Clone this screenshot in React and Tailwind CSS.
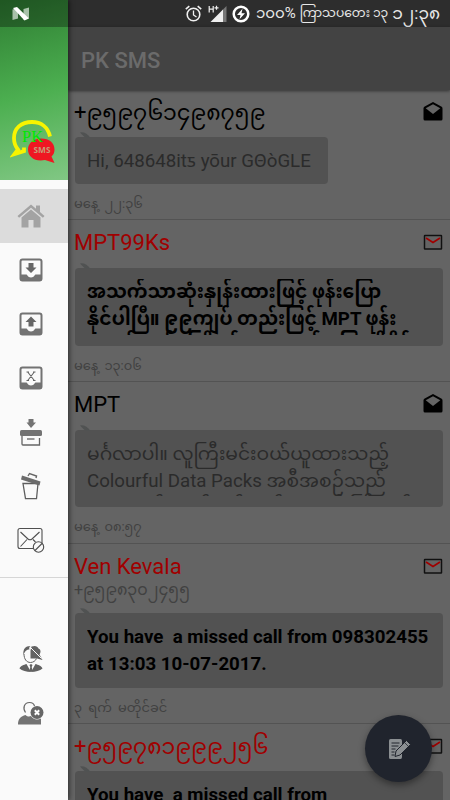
import React from 'react';
import clsx from 'clsx';

const FONT = "font-[Roboto,'Noto_Sans_Myanmar',Padauk,'Noto_Sans','DejaVu_Sans',sans-serif]";

const messages = [
  {
    name: '+၉၅၉၇၆၁၄၉၈၇၅၉',
    read: true,
    height: 'h-[130px]',
    headHeight: 'h-[47px]',
    bubble: 'h-[47px] w-[253px]',
    lines: ['Hi, 648648itƽ yōur GΘòGLE'],
    time: 'မနေ့ ၂၂:၃၆',
  },
  {
    name: 'MPT99Ks',
    read: false,
    height: 'h-[162px]',
    headHeight: 'h-[48px]',
    bubble: 'h-[78px] w-[368px]',
    lines: [
      'အသက်သာဆုံးနှုန်းထားဖြင့် ဖုန်းပြော',
      'နိုင်ပါပြီ။ ၉၉ကျပ် တည်းဖြင့် MPT ဖုန်း',
      'အချင်းချင်း ကြိုက်သလောက် ပြောဆိုနိုင်',
    ],
    time: 'မနေ့ ၁၃:၀၆',
  },
  {
    name: 'MPT',
    read: true,
    height: 'h-[162px]',
    headHeight: 'h-[48px]',
    bubble: 'h-[77px] w-[368px]',
    lines: ['မင်္ဂလာပါ။ လူကြီးမင်းဝယ်ယူထားသည့်', 'Colourful Data Packs အစီအစဉ်သည်', 'ယနေ့တွင် သက်တမ်းကုန်ဆုံးမည် ကြိုတင်'],
    time: 'မနေ့ ၀၈:၅၇',
  },
  {
    name: 'Ven Kevala',
    number: '+၉၅၉၈၃၀၂၄၅၅',
    read: false,
    height: 'h-[180px]',
    headHeight: 'h-[69px]',
    bubble: 'h-[75px] w-[368px]',
    lines: ['You have  a missed call from 098302455', 'at 13:03 10-07-2017.'],
    time: '၃ ရက် မတိုင်ခင်',
  },
  {
    name: '+၉၅၉၇၈၁၉၉၉၂၅၆',
    read: false,
    height: 'h-[162px]',
    headHeight: 'h-[47px]',
    bubble: 'h-[77px] w-[368px]',
    lines: ['You have  a missed call from'],
    time: '',
  },
];

function NougatIcon() {
  return (
    <svg width="18" height="14" viewBox="0 0 18 14">
      <path d="M0.5 2.5 6 1v10.500L0.500 13z" fill="#a9c2aa" />
      <path d="M11.500 2 17 0.500v10.500l-5.500 2z" fill="#a9c2aa" />
      <path d="M1 1 5 0 17 11.500 12.500 13.500z" fill="#fff" />
    </svg>
  );
}

function LogoIcon() {
  return (
    <svg width="48" height="46" viewBox="0 0 48 46">
      <path d="M40 17.500C38 8 31 3 22 3 11 3 4 9.500 4 19c0 5 1.500 8.500 4 11.500L4.500 35l9.500-3v-3.500" fill="none" stroke="#f8f400" strokeWidth="3.800" />
      <path d="M31 19.500c8.500 0 13.500 4.500 13.500 11 0 3-1 5-3 7l3 6.500-9.500-3c-10 2-17-3-17-10.500 0-6 5-11 13-11z" fill="#ef1722" />
      <text x="12" y="22.500" fontSize="17" textLength="21" lengthAdjust="spacingAndGlyphs" fill="#00e800" fontFamily="Liberation Serif, serif">PK</text>
      <text x="23.500" y="33.500" fontSize="8.500" fontWeight="700" textLength="17" lengthAdjust="spacingAndGlyphs" fill="#c99a75" fontFamily="Open Sans, sans-serif">SMS</text>
    </svg>
  );
}

function HomeIcon() {
  return (
    <svg width="28" height="24" viewBox="0 0 28 24" fill="#a3a3a3">
      <path d="M14 0.500 0.500 12l1.600 1.700L14 3.700l11.900 10 1.600-1.700-4.500-3.900V1.500h-4v3.200z" />
      <path d="M14 5.500 4.500 13.500V23.500h7v-7.500h5v7.500h7V13.500z" />
    </svg>
  );
}

function TrayIcon({ type }) {
  return (
    <svg width="24" height="24" viewBox="0 0 24 24">
      <rect x="1.500" y="1.500" width="21" height="21" rx="2" fill="#fafafa" stroke="#737373" strokeWidth="2" />
      <path d="M1.500 16.500h6c1 0 1 3 4.500 3s3.500-3 4.500-3h6v6h-21z" fill="#737373" />
      {type === 'in' && <path d="M9.500 5h5v4.500h3L12 15 6.500 9.500h3z" fill="#666" />}
      {type === 'out' && <path d="M9.500 14.500h5V10h3L12 4.500 6.500 10h3z" fill="#666" />}
      {type === 'draft' && <path d="m8.700 6 6.600 8.500M15.300 6l-6.600 8.500M7.500 6H10M14 6h2.500M7.500 14.500H10M14 14.500h2.500" stroke="#666" strokeWidth="1.100" />}
    </svg>
  );
}

function ArchiveIcon() {
  return (
    <svg width="24" height="28" viewBox="0 0 24 28">
      <path d="M9.500 1h5v3.500H17L12 10 7.500 4.500h2z" fill="#737373" />
      <rect x="1" y="12" width="22" height="6" rx="1.500" fill="#737373" />
      <path d="M3 18v8q0 1 1 1h16.500V20" fill="none" stroke="#666" strokeWidth="1.300" />
      <path d="M8 21h7.500" stroke="#777" strokeWidth="1.500" />
    </svg>
  );
}

function TrashIcon() {
  return (
    <svg width="24" height="28" viewBox="0 0 24 28">
      <path d="M4 11.500h15l-1.500 15.200h-11z" fill="none" stroke="#5e5e5e" strokeWidth="1.300" />
      <path d="m3 3.500 18.500 6-1 4L2 7.500z" fill="#6c6c6c" />
      <path d="m9 4 1.500-2.500 7 2.500-.5 2" fill="none" stroke="#666" strokeWidth="1.400" />
    </svg>
  );
}

function BlockedMailIcon() {
  return (
    <svg width="28" height="26" viewBox="0 0 28 26" fill="none" stroke="#4f4f4f" strokeWidth="1.100">
      <rect x="1" y="1.500" width="24" height="20" rx="2" />
      <path d="m3.500 5 7.500 7q2 1.500 4 0l7.500-7M3.500 19.500l6.500-7M16 12.500l2.500 2.500" />
      <circle cx="21.500" cy="20" r="5.200" fill="#fafafa" />
      <path d="m18 23.500 7-7" />
    </svg>
  );
}

function SpamContactIcon() {
  return (
    <svg width="24" height="28" viewBox="0 0 24 28">
      <path d="M4.500 10C3.500 4 7 .8 11.500 1c-1.500 1-1.500 2.500-1 3.500C7.500 4.500 6 6 4.500 10z" fill="#626262" />
      <path d="M12.500 1.500c4-1.500 6 0 7 2 2.500 1 2.500 4 1 6l3 5.500-5.500-1.500h-6.500V5.500z" fill="#626262" />
      <path d="M5 9c0 5 2.500 8.500 6.500 8.500 2.500 0 5-1.500 6-4" fill="none" stroke="#626262" strokeWidth="1" />
      <path d="M0.500 23.500c1-3 4.500-3.500 7-4.500l4.500 8 4.500-8c2.500 1 6 1.500 7 4.500-5 4.500-18 4.500-23 0z" fill="#626262" />
      <path d="m10.500 20 1.500-1 1.500 1-.8 2 .8 3.500-1.500 1.500-1.500-1.500.8-3.500z" fill="#626262" />
      <path d="m11.500 2.500 11 11" stroke="#fafafa" strokeWidth="1" />
    </svg>
  );
}

function BlockContactIcon() {
  return (
    <svg width="28" height="24" viewBox="0 0 28 24">
      <path d="M8.500 11.500C5.500 7.500 7 1.500 12.500 1.500c2.500 0 4.500 1.500 5 3.500" fill="none" stroke="#666" strokeWidth="1.200" />
      <path d="M1 23.500c0-6 3-8 7.500-9.500 2 1.800 4 1.800 5.500 1 2 3.500 6 4.500 10 2.500v6z" fill="#737373" />
      <circle cx="20" cy="11.500" r="6.500" fill="#666" />
      <path d="m17.800 9.300 4.400 4.400m0-4.400-4.400 4.400" stroke="#fff" strokeWidth="2" />
    </svg>
  );
}

function MailStateIcon({ read }) {
  if (read) {
    return (
      <svg width="20" height="20" viewBox="0 0 20 20">
        <path d="M10 0 1.300 4.800Q.5 5.300.5 6.500V17q0 1.500 1.500 1.500h16q1.500 0 1.500-1.500V6.500q0-1.200-.8-1.700z" fill="#000" />
        <path d="m10 2.200 7.300 4.100L10 12 2.700 6.300z" fill="#646464" />
      </svg>
    );
  }
  return (
    <svg width="20" height="20" viewBox="0 0 20 20" fill="none">
      <rect x="1.500" y="3.500" width="17" height="13.500" rx=".5" stroke="#101010" strokeWidth="1.500" />
      <path d="m3 6 7 4.500L17 6" stroke="#a00000" strokeWidth="1.700" />
    </svg>
  );
}

function StatusIcons() {
  return (
    <div className="flex items-center">
      <svg width="17" height="18" viewBox="0 0 17 18" fill="none" stroke="#f0f0f0">
        <circle cx="8.500" cy="9.500" r="6.300" strokeWidth="1.600" />
        <path d="M8.500 5.500v4.500l3 2" strokeWidth="1.300" />
        <path d="m.8 4.200 3.500-3M16.200 4.200l-3.500-3" strokeWidth="1.600" />
      </svg>
      <svg className="ml-1.5" width="19" height="18" viewBox="0 0 19 18">
        <path d="M18.500 1v16h-4V5z" fill="#777" />
        <path d="M15 4.500V17H2.500z" fill="#f0f0f0" />
        <path d="M1.200 1v6.500M5.200 1v6.500M1.200 4.200h4M6.500 2.800h4M8.500 .8v4" stroke="#f0f0f0" strokeWidth="1.200" />
      </svg>
      <svg className="ml-[5px]" width="18" height="18" viewBox="0 0 18 18">
        <circle cx="9" cy="9" r="7.300" fill="none" stroke="#fff" strokeWidth="2.500" />
        <path d="M10.500 3.800 5 10h3.500l-1 4.300L13 8.200H9.500z" fill="#fff" />
      </svg>
    </div>
  );
}

function DrawerItem({ active, children }) {
  return (
    <button className={clsx('flex h-[54px] w-full shrink-0 items-center justify-center pr-[6px]', active && 'bg-[#dcdcdc]')}>
      {children}
    </button>
  );
}

function Drawer() {
  return (
    <nav className="z-10 flex h-full w-[68px] shrink-0 flex-col bg-[#fafafa] shadow-[1px_0_5px_rgba(0,0,0,0.6)]">
      <div className="flex h-[180px] shrink-0 flex-col bg-[linear-gradient(165deg,#2e7d32,#4caf50_52%,#81c784)]">
        <div className="flex h-[27px] items-center bg-black/30 pl-3">
          <NougatIcon />
        </div>
        <div className="mt-[92px] pl-[10px]">
          <LogoIcon />
        </div>
      </div>
      <div className="h-[9px] shrink-0" />
      <DrawerItem active><HomeIcon /></DrawerItem>
      <DrawerItem><TrayIcon type="in" /></DrawerItem>
      <DrawerItem><TrayIcon type="out" /></DrawerItem>
      <DrawerItem><TrayIcon type="draft" /></DrawerItem>
      <DrawerItem><ArchiveIcon /></DrawerItem>
      <DrawerItem><TrashIcon /></DrawerItem>
      <DrawerItem><BlockedMailIcon /></DrawerItem>
      <div className="mt-[10px] mb-[54px] h-px shrink-0 bg-[#d6d6d6]" />
      <DrawerItem><SpamContactIcon /></DrawerItem>
      <DrawerItem><BlockContactIcon /></DrawerItem>
    </nav>
  );
}

function MessageRow({ msg }) {
  return (
    <article className={clsx('shrink-0 border-b border-[#535353] pl-[7px]', msg.height)}>
      <div className={clsx('flex justify-between pr-[7px]', msg.headHeight)}>
        <div className="-ml-px flex flex-col pt-[9px] whitespace-nowrap">
          <span className={clsx('h-[27px] text-[22px] leading-[28px]', msg.read ? 'text-black' : 'text-[#a00000]')}>
            {msg.name}
          </span>
          {msg.number && <span className="h-[20px] text-[16px] leading-[20px] text-[#414141]">{msg.number}</span>}
        </div>
        <div className="pt-[12px]"><MailStateIcon read={msg.read} /></div>
      </div>
      <div className={clsx('relative rounded-[4px] bg-[#525252] px-3 pt-[11px] pb-[11px]', msg.bubble)}>
        <svg className="absolute -top-[5px] left-[5px]" width="12" height="6" viewBox="0 0 12 6">
          <path d="M0 0.500Q6-.5 10.500 6H6Q3.500 4.500 0 0.500z" fill="#505252" />
        </svg>
        <div className={clsx('h-full overflow-hidden text-[18.7px] leading-[27px]', msg.read ? 'text-[#2b2b2b]' : 'font-bold text-black')}>
          {msg.lines.map((line, i) => (
            <p key={i} className={clsx('h-[27px] whitespace-pre', i === 2 && '-mt-[2px]')}>{line}</p>
          ))}
        </div>
      </div>
      <p className="-ml-px mt-[11px] text-[13px] leading-[18px] [word-spacing:3px] whitespace-nowrap text-[#414141]">{msg.time}</p>
    </article>
  );
}

export default function App() {
  return (
    <div className={clsx('relative flex h-[800px] w-[450px] overflow-hidden bg-[#646464]', FONT)}>
      <Drawer />
      <main className="flex h-full min-w-0 flex-1 flex-col">
        <div className="flex h-[27px] shrink-0 items-center justify-end bg-[#2d2d2d] pr-[10px] whitespace-nowrap text-[#e8e8e8]">
          <StatusIcons />
          <span className="ml-1.5 text-[15px]">၁၀၀%</span>
          <span className="ml-1 text-[12.3px]">ကြာသပတေး ၁၃</span>
          <span className="ml-1 text-[17px]">၁၂:၃၈</span>
        </div>
        <header className="z-[1] flex h-[63px] shrink-0 items-center bg-[#434343] pt-[3px] pl-[13px] shadow-[0_1px_3px_rgba(0,0,0,0.5)]">
          <h1 className="text-[22px] font-medium text-[#6b6b6b]">PK SMS</h1>
        </header>
        {messages.map((msg) => (
          <MessageRow key={msg.name} msg={msg} />
        ))}
      </main>
      <button className="absolute right-[18px] bottom-[18px] z-20 flex size-[67px] items-center justify-center rounded-full bg-[#20242d] shadow-[0_3px_7px_rgba(0,0,0,0.4)]">
        <svg width="24" height="24" viewBox="0 0 24 24">
          <path d="M3.500 2h10q1.500 0 1.500 2v16q0 2-1.500 2H3.500Q2 22 2 20.500v-17Q2 2 3.500 2z" fill="#8b8f92" />
          <path d="M4.500 6h8M4.500 9h7M4.500 12h4M4.500 15h3M4.500 18h3" stroke="#20242d" strokeWidth="1" />
          <path d="m9 14 10.500-10.500 4 4L13 18l-5 1.500z" fill="#8b8f92" stroke="#20242d" strokeWidth="1" />
          <path d="m17.500 5.500 4 4" stroke="#20242d" strokeWidth=".8" />
        </svg>
      </button>
    </div>
  );
}
